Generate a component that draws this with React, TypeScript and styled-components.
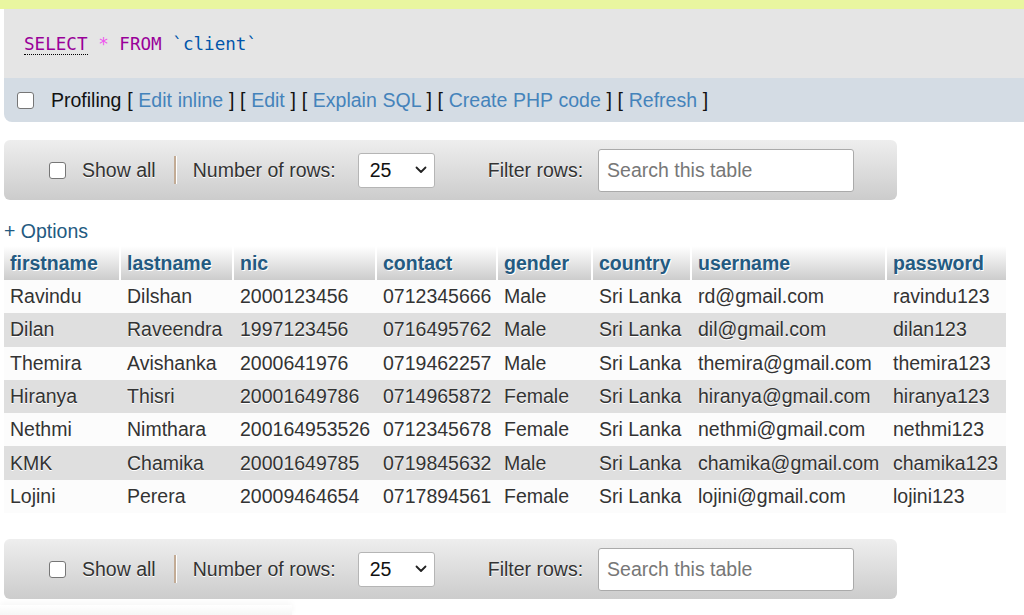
import React from 'react';
import styled, { createGlobalStyle } from 'styled-components';

const GlobalStyle = createGlobalStyle`
  body {
    margin: 0;
    background: #fff;
    font-family: 'Liberation Sans', Arial, sans-serif;
    font-size: 19.5px;
    color: #333;
    overflow: hidden;
  }
`;

const Page = styled.div`
  width: 1024px;
`;

const TopStrip = styled.div`
  height: 9px;
  background: #e9f6a0;
`;

const SqlBox = styled.div`
  margin-left: 4px;
  height: 69px;
  box-sizing: border-box;
  padding: 25px 0 0 20px;
  background: #e5e5e5;
  font-family: 'DejaVu Sans Mono', 'Liberation Mono', monospace;
  font-size: 17.6px;
  white-space: pre;
`;

const Token = styled.span<{ $kind: 'keyword' | 'op' | 'name' }>`
  color: ${(p) => (p.$kind === 'keyword' ? '#990099' : p.$kind === 'op' ? '#ee55ee' : '#0055aa')};
`;

const Keyword = styled(Token)`
  border-bottom: 1px dotted #000;
`;

const ProfilingBar = styled.div`
  margin-left: 4px;
  height: 44px;
  display: flex;
  align-items: center;
  padding-left: 13px;
  background: #d4dce4;
  border-bottom-left-radius: 8px;
  color: #111;
`;

const Check = styled.input.attrs({ type: 'checkbox' })`
  appearance: none;
  margin: 0;
  width: 17px;
  height: 17px;
  box-sizing: border-box;
  border: 1.5px solid #767676;
  border-radius: 3px;
  background: #fff;
  flex: none;
`;

const ProfilingLabel = styled.span`
  margin-left: 17px;
  white-space: pre;
  word-spacing: 0.3px;
`;

const Link = styled.a`
  color: #4483bb;
  text-decoration: none;
`;

const Navigation = styled.div<{ $top: number }>`
  margin: ${(p) => p.$top}px 0 0 4px;
  width: 893px;
  height: 60px;
  box-sizing: border-box;
  padding-left: 45px;
  display: flex;
  align-items: center;
  border-radius: 6px;
  background: linear-gradient(#eeeeee, #cccccc);
  text-shadow: 0 1px 0 #fff;
`;

const NavText = styled.span<{ $left: number }>`
  margin-left: ${(p) => p.$left}px;
  white-space: nowrap;
`;

const Divider = styled.span`
  margin-left: 18px;
  width: 2px;
  height: 28px;
  background: #c2ab95;
  border-right: 1px solid #fff;
`;

const RowSelect = styled.div`
  margin-left: 22px;
  width: 77px;
  height: 35px;
  box-sizing: border-box;
  padding: 0 7px 0 11px;
  display: flex;
  align-items: center;
  justify-content: space-between;
  background: #fff;
  border: 1px solid #b5b5b5;
  border-radius: 3px;
  color: #111;
  text-shadow: none;
`;

const Search = styled.input`
  margin-left: 15px;
  width: 256px;
  height: 43px;
  box-sizing: border-box;
  padding: 0 8px;
  border: 1px solid #aaa;
  border-radius: 3px;
  background: #fff;
  font-family: inherit;
  font-size: 19.5px;
  color: #333;
  &::placeholder {
    color: #777;
  }
`;

const Options = styled.a`
  display: block;
  margin: 19px 0 0 4px;
  line-height: 24px;
  color: #235a81;
  text-decoration: none;
`;

const Table = styled.table`
  margin: 3px 0 0 4px;
  width: 1002px;
  table-layout: fixed;
  border-collapse: separate;
  border-spacing: 0;
`;

const Th = styled.th`
  height: 34px;
  padding: 0 6px;
  text-align: left;
  font-weight: bold;
  color: #235a81;
  background: linear-gradient(#ffffff, #cccccc);
  text-shadow: 1px 1px 0 #fff;
  border-right: 2px solid #fff;
  &:last-child {
    border-right: none;
  }
`;

const Row = styled.tr<{ $even: boolean }>`
  background: ${(p) => (p.$even ? '#dfdfdf' : '#fcfcfc')};
`;

const Td = styled.td`
  height: 33.3px;
  padding: 0 6px;
  white-space: nowrap;
  overflow: hidden;
  color: #333;
  text-shadow: 0 1px 0 #fff;
  border-right: 2px solid transparent;
  &:last-child {
    border-right: none;
  }
`;

const ShadowStub = styled.div`
  margin-top: 6px;
  width: 292px;
  height: 12px;
  background: linear-gradient(#ffffff, #f4f4f4);
  box-shadow: 0 -2px 6px rgba(0, 0, 0, 0.04);
`;

const columns = ['firstname', 'lastname', 'nic', 'contact', 'gender', 'country', 'username', 'password'];
const widths = [117, 113, 143, 121, 95, 99, 195, 119];

const rows = [
  ['Ravindu', 'Dilshan', '2000123456', '0712345666', 'Male', 'Sri Lanka', 'rd@gmail.com', 'ravindu123'],
  ['Dilan', 'Raveendra', '1997123456', '0716495762', 'Male', 'Sri Lanka', 'dil@gmail.com', 'dilan123'],
  ['Themira', 'Avishanka', '2000641976', '0719462257', 'Male', 'Sri Lanka', 'themira@gmail.com', 'themira123'],
  ['Hiranya', 'Thisri', '20001649786', '0714965872', 'Female', 'Sri Lanka', 'hiranya@gmail.com', 'hiranya123'],
  ['Nethmi', 'Nimthara', '200164953526', '0712345678', 'Female', 'Sri Lanka', 'nethmi@gmail.com', 'nethmi123'],
  ['KMK', 'Chamika', '20001649785', '0719845632', 'Male', 'Sri Lanka', 'chamika@gmail.com', 'chamika123'],
  ['Lojini', 'Perera', '20009464654', '0717894561', 'Female', 'Sri Lanka', 'lojini@gmail.com', 'lojini123'],
];

const Chevron = () => (
  <svg width="12" height="8" viewBox="0 0 12 8" fill="none">
    <path d="M1.5 1.5 6 6l4.5-4.5" stroke="#222" strokeWidth="1.8" strokeLinecap="round" strokeLinejoin="round" />
  </svg>
);

const NavBar: React.FC<{ top: number }> = ({ top }) => (
  <Navigation $top={top}>
    <Check />
    <NavText $left={16}>Show all</NavText>
    <Divider />
    <NavText $left={16}>Number of rows:</NavText>
    <RowSelect>
      <span>25</span>
      <Chevron />
    </RowSelect>
    <NavText $left={53}>Filter rows:</NavText>
    <Search placeholder="Search this table" />
  </Navigation>
);

const App: React.FC = () => {
  return (
    <Page>
      <GlobalStyle />
      <TopStrip />
      <SqlBox>
        <Keyword $kind="keyword">SELECT</Keyword> <Token $kind="op">*</Token> <Token $kind="keyword">FROM</Token>{' '}
        <Token $kind="name">`client`</Token>
      </SqlBox>
      <ProfilingBar>
        <Check />
        <ProfilingLabel>
          Profiling [ <Link href="#">Edit inline</Link> ] [ <Link href="#">Edit</Link> ] [{' '}
          <Link href="#">Explain SQL</Link> ] [ <Link href="#">Create PHP code</Link> ] [{' '}
          <Link href="#">Refresh</Link> ]
        </ProfilingLabel>
      </ProfilingBar>
      <NavBar top={18} />
      <Options href="#">+ Options</Options>
      <Table>
        <colgroup>
          {widths.map((w, i) => (
            <col key={i} style={{ width: w }} />
          ))}
        </colgroup>
        <thead>
          <tr>
            {columns.map((c) => (
              <Th key={c}>{c}</Th>
            ))}
          </tr>
        </thead>
        <tbody>
          {rows.map((r, i) => (
            <Row key={i} $even={i % 2 === 1}>
              {r.map((v, j) => (
                <Td key={j}>{v}</Td>
              ))}
            </Row>
          ))}
        </tbody>
      </Table>
      <NavBar top={26} />
      <ShadowStub />
    </Page>
  );
};

export default App;
